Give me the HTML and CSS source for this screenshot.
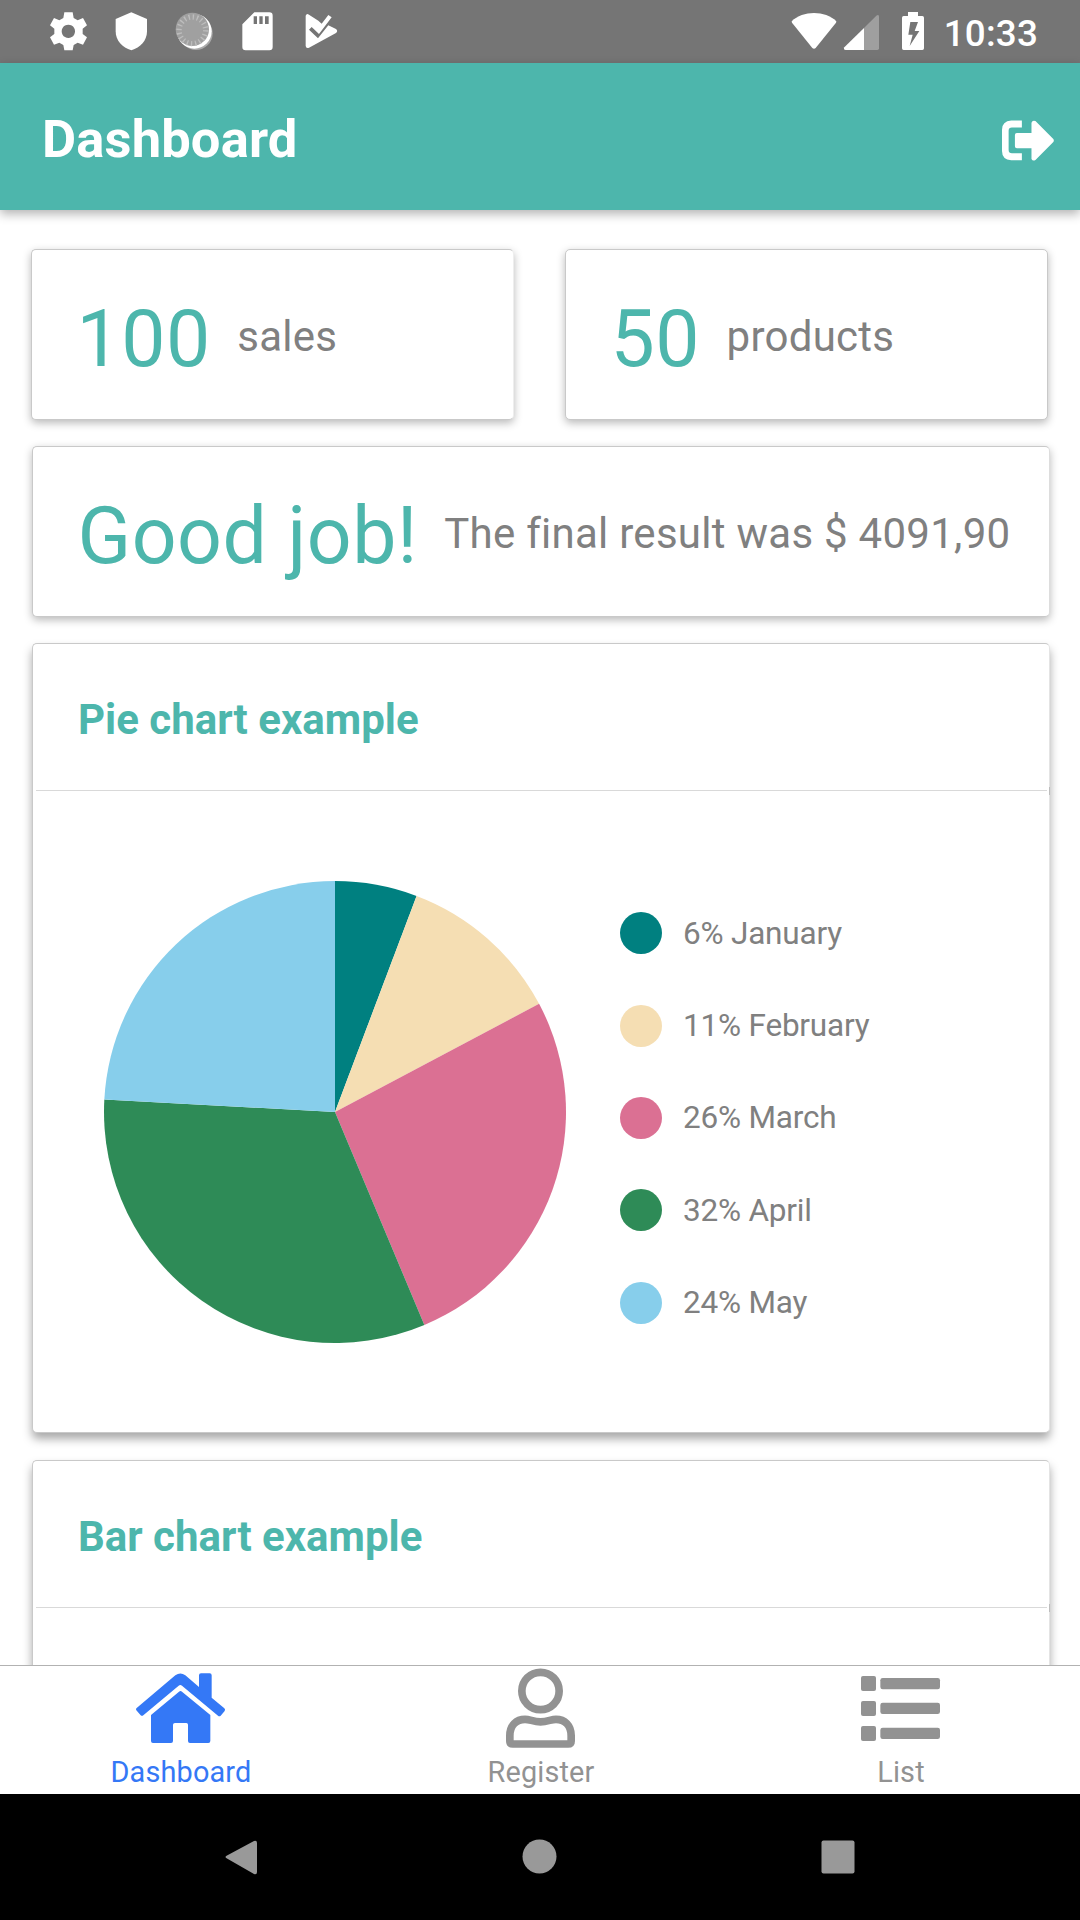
FILE: index.html
```html
<!DOCTYPE html>
<html lang="en">
<head>
<meta charset="utf-8">
<title>Dashboard</title>
<link rel="stylesheet" href="styles.css">
</head>
<body>
<div class="screen">
  <div class="status-bar">
    <div class="status-left">
      <svg class="cell" viewBox="111 0 189 189"><path fill="#fff" fill-rule="evenodd" d="M193 37h25l3 17 12 7 16-7 12 22-13 10v16l13 10-12 22-16-6-12 7-3 16h-25l-3-16-12-7-16 6-12-22 13-10v-16l-13-10 12-22 16 7 12-7zM205 74a20 20 0 1 0 .1 0z"/></svg>
      <svg class="cell" viewBox="300 0 189 189"><path fill="#fff" d="M394 37l47 20v37c0 28-20 49-47 57-27-8-47-29-47-57V57z"/></svg>
      <svg class="cell" viewBox="489 0 189 189"><circle cx="588" cy="100" r="50" fill="#aaa"/><circle cx="583" cy="94" r="52" fill="#fff"/><circle cx="577" cy="88" r="50" fill="#a0a0a0"/><circle cx="577" cy="91" r="40" fill="none" stroke="#bdbdbd" stroke-width="16" stroke-dasharray="4 8.56"/></svg>
      <svg class="cell" viewBox="678 0 189 189"><path fill="#fff" fill-rule="evenodd" d="M763 37h45q10 0 10 10v94q0 10-10 10h-71q-10 0-10-10V73zM761 49v23h10V49zm17 0v23h10V49zm17 0v23h11V49z"/></svg>
      <svg class="cell" viewBox="867 0 189 189"><path fill="#fff" d="M917 47q3-8 10-3l28 18 10 9 20-26 10 7-38 50-22-21-8 8 27 26 31-39 23 11q7 6 0 12l-81 44q-9 3-10-5z"/></svg>
    </div>
    <div class="status-right">
      <svg class="wifi" viewBox="90 0 150 189"><path fill="#fff" d="M95 64C128 31 196 31 229 64l-1 4-61 76q-5 5-10 0L96 68z"/></svg>
      <svg class="signal" viewBox="240 0 177 189"><path fill="#9f9f9f" d="M312 84l37-37q8-5 8 3v95q0 5-5 5h-40z"/><path fill="#fff" d="M312 84v66h-55q-8-1-4-8z"/></svg>
      <svg class="battery" viewBox="417 0 84 189"><path fill="#fff" fill-rule="evenodd" d="M444 36h30v12h13q5 0 5 5v92q0 5-5 5h-56q-5 0-5-5V53q0-5 5-5h13zM451 66l-6 38h13l-9 34 29-45h-14l10-27z"/></svg>
      <span class="clock">10:33</span>
    </div>
  </div>

  <header class="app-bar">
    <h1 class="app-title">Dashboard</h1>
    <svg class="logout" viewBox="726 359 157 123"><path fill="#fff" d="M786 360v21h-30q-10 0-10 10v58q0 10 10 10h30v21h-32q-28-2-28-28v-64q0-26 28-28zM771 398h44v-31q3-9 12-5l54 54q3 5 0 9l-54 54q-8 5-12-3v-32h-44q-6 0-6-6v-34q0-6 6-6z"/></svg>
  </header>

  <main class="content">
    <div class="stats">
      <section class="card stat stat-sales"><span class="value">100</span><span class="label">sales</span></section>
      <section class="card stat"><span class="value">50</span><span class="label">products</span></section>
    </div>
    <section class="card stat result"><span class="value">Good job!</span><span class="label">The final result was $ 4091,90</span></section>
    <section class="card chart-card pie-card">
      <h2 class="card-title">Pie chart example</h2>
      <div class="chart">
        <svg class="pie" viewBox="-231 -231 462 462">
          <path fill="#008080" d="M0 0V-231A231 231 0 0 1 81.59 -216.11z"/>
          <path fill="#f5deb3" d="M0 0L81.59 -216.11A231 231 0 0 1 204.09 -108.21z"/>
          <path fill="#db7093" d="M0 0L204.09 -108.21A231 231 0 0 1 89.36 213.01z"/>
          <path fill="#2e8b57" d="M0 0L89.36 213.01A231 231 0 0 1 -230.66 -12.5z"/>
          <path fill="#87ceeb" d="M0 0L-230.66 -12.5A231 231 0 0 1 0 -231z"/>
        </svg>
        <ul class="legend">
          <li><i class="dot january"></i><span>6% January</span></li>
          <li><i class="dot february"></i><span>11% February</span></li>
          <li><i class="dot march"></i><span>26% March</span></li>
          <li><i class="dot april"></i><span>32% April</span></li>
          <li><i class="dot may"></i><span>24% May</span></li>
        </ul>
      </div>
    </section>
    <section class="card chart-card bar-card">
      <h2 class="card-title">Bar chart example</h2>
      <div class="chart"></div>
    </section>
  </main>

  <nav class="tabs">
    <a class="tab active">
      <svg class="tab-icon" viewBox="105 48 273 258"><path fill="currentColor" d="M110 174L226 76q15-11 30 0l41 35V76q0-6 6-6h26q6 0 6 6v67l38 32q4 4 1 8l-12 14q-4 3-8 0L246 107q-5-4-10 0L130 196q-4 3-8 0l-13-15q-3-4 1-7z"/><path fill="currentColor" d="M153 195l84-70q5-4 9 0l85 70v78q0 6-6 6h-55q-6 0-6-6v-49q0-5-5-5h-34q-6 0-6 5v49q0 6-6 6h-54q-6 0-6-6z"/></svg>
      <span>Dashboard</span>
    </a>
    <a class="tab">
      <svg class="tab-icon" viewBox="1185 48 273 258"><g fill="none" stroke="currentColor" stroke-width="23"><circle cx="1321.500" cy="123" r="56"/><path d="M1229.500 257C1229.500 226 1249 208 1275 208C1290 208 1300 215.500 1321.500 215.500S1353 208 1368 208C1394 208 1413.500 226 1413.500 257V273q0 9-9 9H1238.500q-9 0-9-9z"/></g></svg>
      <span>Register</span>
    </a>
    <a class="tab">
      <svg class="tab-icon" viewBox="165 318 273 258"><g fill="currentColor"><rect x="183" y="348" width="45" height="45" rx="6"/><rect x="183" y="423" width="45" height="45" rx="6"/><rect x="183" y="498" width="45" height="45" rx="6"/><rect x="241" y="354" width="179" height="34" rx="7"/><rect x="241" y="428" width="179" height="34" rx="7"/><rect x="241" y="503" width="179" height="34" rx="7"/></g></svg>
      <span>List</span>
    </a>
  </nav>

  <div class="system-nav">
    <svg class="sys" viewBox="0 0 40 48"><path fill="#999" d="M5 22.500L32 8q3-1 3 2v29q0 3-3 2L5 25.500q-3-1.500 0-3z"/></svg>
    <svg class="sys" viewBox="0 0 40 48"><circle cx="19.500" cy="23.500" r="17" fill="#999"/></svg>
    <svg class="sys" viewBox="0 0 40 48"><rect x="3.500" y="7.500" width="33" height="33" rx="2" fill="#999"/></svg>
  </div>
</div>
</body>
</html>
```

FILE: styles.css
```css
* { box-sizing: border-box; }
body { margin: 0; font-family: Roboto, sans-serif; background: #fff; }
svg { display: block; flex: none; }
h1, h2, ul { margin: 0; padding: 0; list-style: none; }

.screen { width: 1080px; height: 1920px; display: flex; flex-direction: column; overflow: hidden; }

.status-bar { height: 63px; flex: none; display: flex; justify-content: space-between; background: #757575; padding: 0 42px 0 37px; }
.status-left, .status-right { display: flex; }
.cell { width: 63px; height: 63px; }
.wifi { width: 50px; height: 63px; }
.signal { width: 59px; height: 63px; }
.battery { width: 28px; height: 63px; }
.clock { margin-left: 17px; font-size: 36.75px; font-weight: 500; line-height: 67px; letter-spacing: .2px; color: #fff; }

.app-bar { height: 147px; flex: none; display: flex; align-items: center; justify-content: space-between; padding: 5px 26px 0 42px; background: #4db6ac; box-shadow: 0 4px 10px rgba(0, 0, 0, .3); position: relative; }
.app-title { font-size: 52.5px; font-weight: 700; line-height: 62px; letter-spacing: .15px; color: #fff; }
.logout { width: 52px; height: 41px; margin-top: 3px; }

.content { flex: 1; min-height: 0; overflow: hidden; display: flex; flex-direction: column; gap: 26px; padding: 39px 31px 0 32px; }
.stats { display: flex; justify-content: space-between; flex: none; margin: 0 1px 0 -1px; }
.card { flex: none; background: #fff; border: 1px solid #c9c9c9; border-radius: 5px; box-shadow: 0 3px 8px rgba(0, 0, 0, .28); }
.stat { width: 483px; height: 171px; display: flex; align-items: center; padding: 9px 0 0 44.5px; white-space: nowrap; }
.stat-sales { border-right-color: #eee; }
.result { width: 1018px; border-right-color: #ddd; }
.value { font-size: 78.75px; line-height: 92px; letter-spacing: .5px; color: #4db6ac; }
.label { margin: 0 0 4px 26.5px; font-size: 42px; line-height: 50px; letter-spacing: .27px; font-variant-ligatures: none; color: #808080; }

.chart-card { width: 1018px; border-right-color: #e4e4e4; }
.card-title { position: relative; height: 147px; margin: 0 2px 0 3px; padding: 5px 0 0 42px; border-bottom: 1px solid #d9d9d9; font-size: 42px; font-weight: 700; line-height: 141px; color: #4db6ac; }
/* end mark of the divider on the card's right edge */
.card-title::after { content: ""; position: absolute; right: -3px; bottom: -5px; width: 1px; height: 8px; background: #bdbdbd; }
.pie-card { height: 790px; box-shadow: 0 6px 10px rgba(0, 0, 0, .34); }
.bar-card { height: 790px; margin-top: 1px; box-shadow: 0 6px 10px rgba(0, 0, 0, .34); }
.chart { display: flex; padding: 90px 0 0 71px; }
.pie { width: 462px; height: 462px; }
.legend { margin: 6px 0 0 54px; }
.legend li { height: 92.4px; display: flex; align-items: center; font-size: 31.5px; line-height: 38px; letter-spacing: -.2px; color: #808080; white-space: nowrap; }
.legend span { padding-top: 1px; }
.dot { width: 42px; height: 42px; border-radius: 50%; margin-right: 21px; }
.january { background: #008080; }
.february { background: #f5deb3; }
.march { background: #db7093; }
.april { background: #2e8b57; }
.may { background: #87ceeb; }

.tabs { height: 129px; flex: none; display: flex; border-top: 1px solid #b2b2b2; background: #fff; position: relative; }
.tab { flex: 1; display: flex; flex-direction: column; align-items: center; color: #929292; font-size: 28.875px; line-height: 34px; letter-spacing: .15px; }
.tab span { padding-left: 2px; }
.active { color: #3478f6; }
.tab-icon { width: 91px; height: 86px; margin-bottom: 3px; }

.system-nav { height: 126px; flex: none; display: flex; align-items: center; justify-content: center; gap: 258px; background: #000; padding-right: 1px; }
.sys { width: 40px; height: 48px; }
```
